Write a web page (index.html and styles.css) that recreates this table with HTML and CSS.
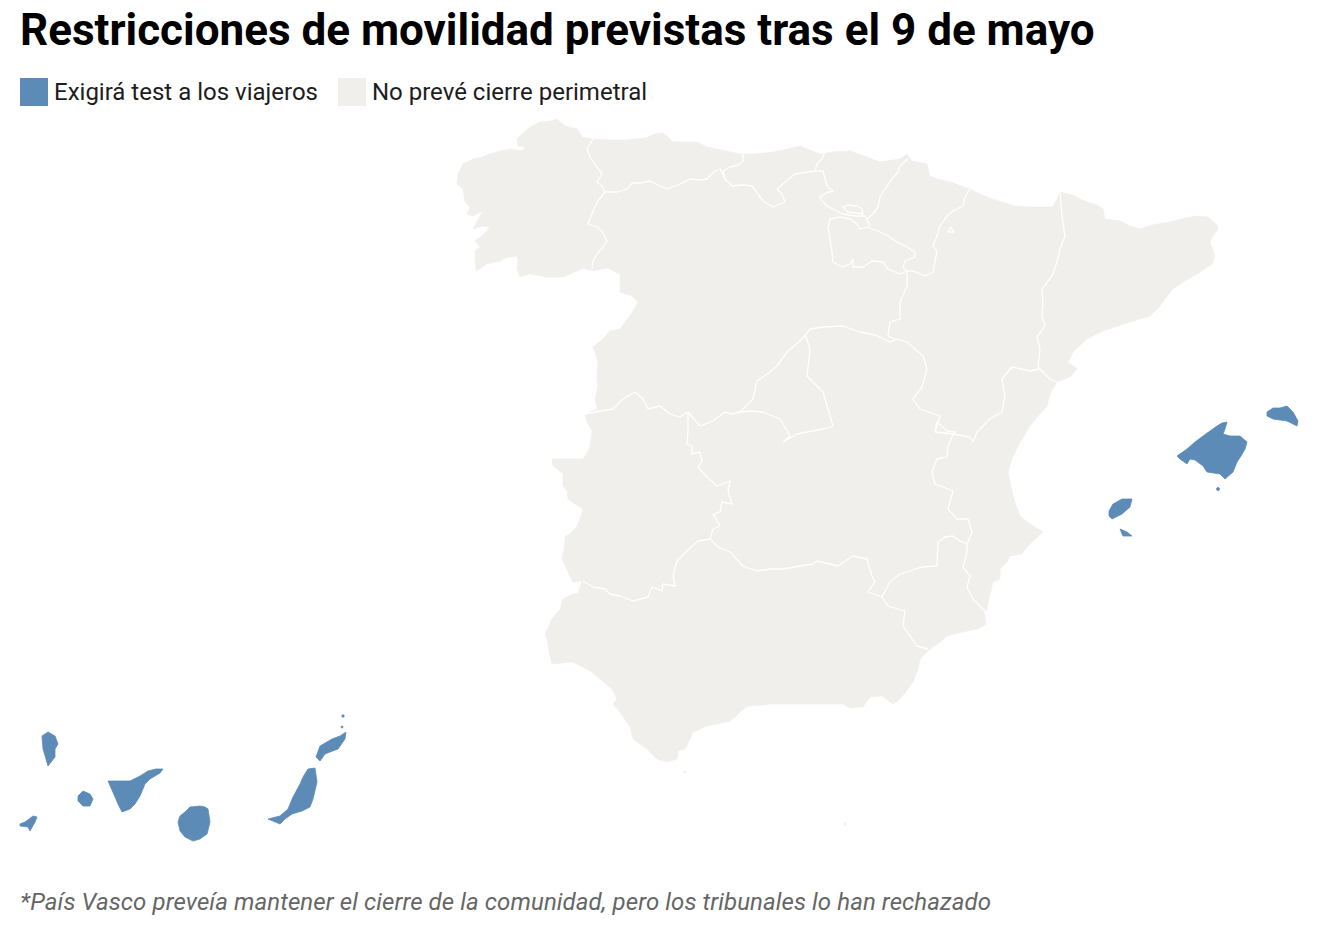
FILE: index.html
```html
<!DOCTYPE html>
<html lang="es">
<head>
<meta charset="utf-8">
<title>Restricciones de movilidad previstas tras el 9 de mayo</title>
<link rel="stylesheet" href="styles.css">
</head>
<body>
<div class="chart">
  <header class="head">
    <h1 class="title">Restricciones de movilidad previstas tras el 9 de mayo</h1>
    <ul class="legend">
      <li class="legend-item"><span class="swatch swatch-blue"></span>Exigirá test a los viajeros</li>
      <li class="legend-item"><span class="swatch swatch-grey"></span>No prevé cierre perimetral</li>
    </ul>
  </header>
  <svg class="map" viewBox="0 115 1328 755" width="1328" height="755" xmlns="http://www.w3.org/2000/svg">
    <g class="land">
      <path d="M517,140 L522,135 L530,128 L540,123 L550,122 L557,120 L565,127 L577,130 L582,138 L593,140 L610,141 L627,141 L645,139 L655,135 L663,134 L668,138 L673,143 L685,143 L697,143 L707,148 L722,151 L740,155 L755,155 L773,153 L788,150 L800,147 L812,152 L820,155 L833,153 L850,152 L867,158 L880,163 L900,160 L907,155 L912,162 L927,165 L930,177 L937,180 L950,183 L970,190 L980,195 L992,200 L1003,203 L1015,207 L1027,208 L1040,208 L1053,208 L1057,200 L1060,193 L1072,196 L1087,203 L1097,206 L1103,210 L1105,220 L1120,222 L1130,227 L1140,230 L1152,226 L1170,223 L1185,219 L1197,217 L1208,218 L1218,227 L1217,232 L1212,238 L1210,243 L1215,257 L1212,265 L1200,273 L1185,282 L1173,290 L1165,300 L1160,307 L1150,317 L1130,323 L1103,332 L1087,340 L1073,353 L1068,363 L1077,370 L1070,378 L1057,383 L1050,395 L1047,407 L1038,417 L1030,427 L1022,440 L1020,443 L1012,460 L1008,473 L1010,483 L1013,497 L1020,517 L1030,525 L1043,533 L1035,540 L1027,548 L1022,555 L1010,557 L1007,563 L1000,570 L1000,580 L993,583 L990,595 L987,610 L985,615 L987,625 L977,630 L963,633 L947,637 L940,643 L930,650 L920,660 L918,670 L913,683 L908,690 L900,700 L893,705 L882,697 L870,698 L863,708 L850,709 L843,705 L820,705 L797,705 L770,705 L763,706 L747,707 L740,713 L735,718 L730,722 L717,725 L707,727 L693,733 L689,742 L685,750 L678,752 L677,760 L667,763 L657,760 L647,750 L640,745 L633,740 L630,728 L620,713 L613,705 L617,700 L612,690 L600,680 L590,672 L573,663 L552,665 L549,653 L547,640 L545,635 L552,620 L560,610 L563,600 L573,595 L578,595 L582,582 L573,583 L568,573 L562,560 L564,550 L565,538 L572,533 L577,527 L580,520 L583,510 L575,505 L568,500 L567,492 L563,487 L563,475 L553,467 L552,460 L583,460 L588,452 L590,447 L592,432 L587,423 L585,415 L597,410 L595,400 L598,387 L597,377 L598,363 L593,348 L603,340 L610,332 L620,330 L630,317 L638,303 L632,297 L620,293 L620,275 L607,269 L593,272 L583,269 L577,272 L563,278 L547,278 L530,275 L520,278 L517,270 L518,262 L517,257 L508,258 L500,262 L487,265 L476,272 L475,252 L480,248 L475,242 L482,237 L490,228 L483,227 L473,230 L477,222 L483,212 L473,217 L467,215 L470,208 L465,203 L463,190 L457,185 L458,175 L463,165 L473,160 L482,158 L490,155 L500,152 L510,150 L522,152 L525,148 L518,147 Z"/>
      <circle cx="685" cy="773" r="1"/>
      <circle cx="845" cy="825" r="1"/>
    </g>
    <g class="borders">
      <path d="M593,140 L587,150 L590,158 L597,168 L602,175 L597,183 L602,187 L605,193 L598,202 L593,212 L588,225 L597,228 L602,232 L607,242 L603,248 L597,255 L593,262 L592,270"/>
      <path d="M605,193 L617,193 L627,190 L632,184 L640,184 L650,182 L658,186 L667,190 L680,185 L690,180 L700,181 L707,180 L715,172 L720,170 L725,180 L732,187 L742,186 L752,187 L758,195 L763,202 L773,208 L785,203 L782,195 L780,193"/>
      <path d="M743,155 L743,162 L738,166 L730,168 L723,172 L725,180"/>
      <path d="M780,193 L777,190 L785,183 L795,175 L808,173 L815,172"/>
      <path d="M825,153 L822,160 L817,165 L815,172 L823,172 L825,180 L827,187 L833,192 L828,193 L820,198 L823,203 L827,207 L837,212 L843,215 L855,217 L865,217 L867,220"/>
      <path d="M908,160 L900,167 L898,173 L892,180 L885,190 L880,198 L878,208 L873,215 L867,220 L870,227"/>
      <path d="M830,220 L840,218 L850,220 L857,225 L860,230 L867,228 L872,230 L880,233 L888,237 L897,243 L907,248 L915,253 L915,258 L905,262 L903,268 L907,272"/>
      <path d="M830,220 L828,228 L830,240 L832,253 L833,263 L842,268 L850,265 L853,260 L853,268 L863,268 L872,262 L883,263 L888,270 L900,275 L907,272"/>
      <path d="M843,208 L848,206 L857,207 L862,210 L863,215 L857,214 L848,213 Z"/>
      <path d="M948,233 L951,228 L954,233 Z"/>
      <path d="M970,190 L965,198 L963,207 L953,212 L947,217 L940,227 L937,237 L933,247 L937,253 L935,262 L933,273 L925,277 L913,272 L907,272 L907,287 L900,303 L900,320 L890,323 L888,337 L895,340"/>
      <path d="M740,413 L753,400 L757,382 L770,373 L777,367 L787,353 L802,340 L810,330 L823,328 L843,327 L860,333 L875,336 L890,343"/>
      <path d="M805,335 L810,350 L807,377 L823,393 L828,410 L833,427 L823,430 L807,433 L797,435 L783,443 L790,437 L780,420 L763,413 L752,412 L740,413"/>
      <path d="M688,413 L700,427 L713,422 L725,413 L732,415 L740,413"/>
      <path d="M585,415 L600,412 L613,410 L623,400 L635,393 L643,400 L648,410 L660,407 L670,415 L680,418 L688,413"/>
      <path d="M688,413 L688,433 L687,445 L692,447 L692,455 L700,453 L702,462 L698,468 L707,478 L717,487 L730,482 L728,492 L732,505 L722,503 L720,513 L713,515 L717,522 L720,527 L713,530 L710,540"/>
      <path d="M710,540 L698,542 L687,552 L677,562 L673,577 L675,587 L663,585 L662,592 L652,588 L648,598 L633,602 L620,597 L610,595 L605,590 L593,588 L583,582"/>
      <path d="M710,540 L718,548 L730,553 L743,567 L757,572 L770,570 L783,570 L800,567 L813,565 L817,562 L830,565 L838,567 L853,557 L867,560 L872,577 L875,583 L868,593 L882,598"/>
      <path d="M882,598 L888,607 L905,612 L903,627 L917,647 L928,650"/>
      <path d="M882,598 L890,583 L900,575 L922,568 L937,567 L938,543 L945,538 L953,537 L960,542 L967,545"/>
      <path d="M967,545 L967,553 L963,568 L970,577 L967,588 L973,600 L985,612 L987,625"/>
      <path d="M967,545 L972,533 L968,520 L957,520 L948,510 L953,492 L943,488 L935,485 L932,473 L937,460 L947,458 L948,447 L952,438 L955,433 L947,432 L937,423 L935,433"/>
      <path d="M890,343 L897,340 L907,343 L923,357 L927,370 L922,388 L913,400 L920,410 L940,417 L935,433"/>
      <path d="M935,433 L953,435 L970,438 L973,443 L977,433 L990,420 L1002,413 L1005,397 L1002,380 L1012,368 L1030,372 L1040,370"/>
      <path d="M1038,368 L1050,380 L1057,383"/>
      <path d="M1060,193 L1062,217 L1065,237 L1060,250 L1057,263 L1052,277 L1042,290 L1043,303 L1042,317 L1045,327 L1037,338 L1040,350 L1038,368"/>
    </g>
    <g class="test">
      <path d="M1177,457 L1187,450 L1195,443 L1203,437 L1210,432 L1217,427 L1222,424 L1227,423 L1225,430 L1223,435 L1230,437 L1240,437 L1247,443 L1245,450 L1241,457 L1237,463 L1233,473 L1225,480 L1220,475 L1207,473 L1203,467 L1195,461 L1190,460 L1187,465 L1180,460 Z"/>
      <circle cx="1218" cy="490" r="1.5"/>
      <path d="M1267,413 L1273,409 L1280,409 L1287,407 L1293,413 L1298,422 L1297,427 L1287,422 L1273,420 L1267,417 Z"/>
      <path d="M1109,512 L1113,505 L1122,500 L1132,500 L1130,508 L1122,515 L1112,520 L1109,517 Z"/>
      <path d="M1120,530 L1123,537 L1132,537 L1127,533 Z"/>
      <path d="M20,825 L25,823 L33,817 L37,818 L35,823 L30,832 L28,828 L20,827 Z"/>
      <path d="M42,737 L48,733 L55,737 L58,745 L55,750 L55,758 L48,767 L46,760 L43,750 Z"/>
      <path d="M78,797 L83,792 L90,795 L93,800 L90,807 L83,807 L78,802 Z"/>
      <path d="M108,782 L120,782 L130,782 L140,777 L148,772 L156,770 L163,770 L160,774 L150,780 L145,785 L140,797 L135,805 L130,810 L122,813 L118,805 L115,798 Z"/>
      <path d="M178,823 L180,817 L185,813 L190,808 L200,807 L205,808 L208,810 L210,823 L207,835 L200,840 L193,842 L185,838 L180,832 Z"/>
      <path d="M268,820 L280,817 L288,810 L293,798 L300,785 L303,778 L308,770 L315,769 L317,783 L313,800 L310,808 L302,812 L292,815 L285,820 L280,825 Z"/>
      <path d="M316,758 L320,747 L332,740 L340,737 L346,733 L345,740 L338,750 L330,753 L325,755 L320,762 Z"/>
      <circle cx="343" cy="717" r="1.2"/>
      <circle cx="342" cy="728" r="1"/>
    </g>
  </svg>
  <p class="note">*País Vasco preveía mantener el cierre de la comunidad, pero los tribunales lo han rechazado</p>
</div>
</body>
</html>
```

FILE: styles.css
```css
* { box-sizing: border-box; }

html, body {
  margin: 0;
  padding: 0;
  background: #ffffff;
}

body {
  font-family: Roboto, "Liberation Sans", Arial, sans-serif;
  color: #000000;
  width: 1328px;
  height: 928px;
  overflow: hidden;
}

.head {
  padding: 0 20px;
}

.title {
  margin: 6px 0 0;
  font-size: 44px;
  line-height: 48px;
  font-weight: 700;
  letter-spacing: 0;
  white-space: nowrap;
}

.legend {
  list-style: none;
  margin: 24px 0 0;
  padding: 0;
  display: flex;
  gap: 20px;
}

.legend-item {
  display: flex;
  align-items: center;
  gap: 6px;
  font-size: 24px;
  line-height: 28px;
  color: #1d1d1d;
}

.swatch {
  display: block;
  width: 28px;
  height: 28px;
}

.swatch-blue { background: #5d8bb7; }
.swatch-grey { background: #f0efeb; }

.map {
  display: block;
  margin-top: 8px;
}

.land {
  fill: #f0efeb;
  stroke: #f0efeb;
  stroke-width: 0.6;
  stroke-linejoin: round;
}

.borders {
  fill: none;
  stroke: #ffffff;
  stroke-width: 1.3;
  stroke-linejoin: round;
}

.test {
  fill: #5d8bb7;
  stroke: #5d8bb7;
  stroke-width: 0.8;
  stroke-linejoin: round;
}

.note {
  margin: 18px 0 0;
  padding: 0 20px;
  font-size: 24px;
  line-height: 30px;
  font-style: italic;
  letter-spacing: 0.1px;
  color: #666666;
  white-space: nowrap;
}
```
